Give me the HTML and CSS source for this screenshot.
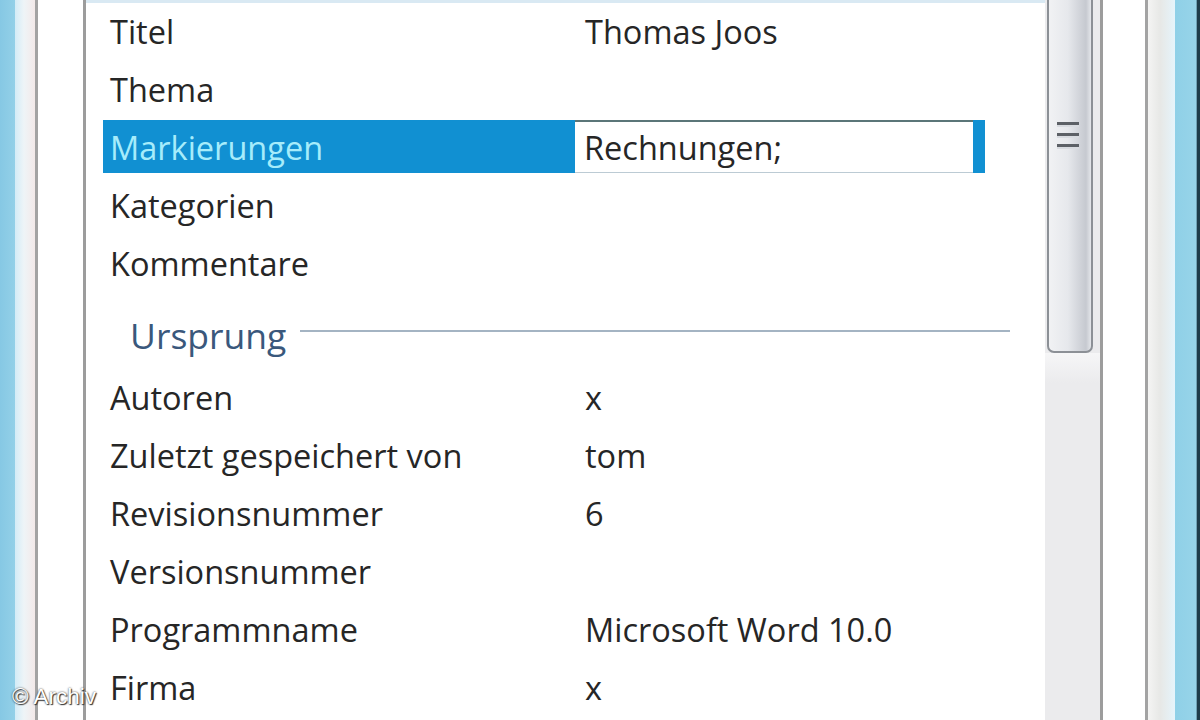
FILE: index.html
```html
<!DOCTYPE html>
<html lang="de">
<head>
<meta charset="utf-8">
<title>Eigenschaften</title>
<link rel="stylesheet" href="styles.css">
</head>
<body>
<div class="frame-blue-l"></div>
<div class="frame-soft-l"></div>
<div class="dialog">
  <div class="listview">
    <div class="content">
      <div class="topline"></div>
      <div class="row"><div class="label">Titel</div><div class="value">Thomas Joos</div></div>
      <div class="row"><div class="label">Thema</div><div class="value"></div></div>
      <div class="row selected"><div class="label">Markierungen</div><div class="edit">Rechnungen;</div></div>
      <div class="row"><div class="label">Kategorien</div><div class="value"></div></div>
      <div class="row"><div class="label">Kommentare</div><div class="value"></div></div>
      <div class="group"><span class="group-title">Ursprung</span><span class="group-line"></span></div>
      <div class="row"><div class="label">Autoren</div><div class="value">x</div></div>
      <div class="row"><div class="label">Zuletzt gespeichert von</div><div class="value">tom</div></div>
      <div class="row"><div class="label">Revisionsnummer</div><div class="value">6</div></div>
      <div class="row"><div class="label">Versionsnummer</div><div class="value"></div></div>
      <div class="row"><div class="label">Programmname</div><div class="value">Microsoft Word 10.0</div></div>
      <div class="row"><div class="label">Firma</div><div class="value">x</div></div>
    </div>
    <div class="scrollbar">
      <div class="thumb">
        <div class="grip"><span></span><span></span><span></span></div>
      </div>
      <div class="track"></div>
    </div>
  </div>
</div>
<div class="frame-soft-r"></div>
<div class="frame-blue-r"></div>
<div class="watermark">© Archiv</div>
</body>
</html>
```

FILE: styles.css
```css
* { box-sizing: border-box; }
html, body { margin: 0; padding: 0; }
body {
  width: 1200px;
  height: 720px;
  overflow: hidden;
  display: flex;
  position: relative;
  background: #ffffff;
  font-family: "Open Sans", "Liberation Sans", sans-serif;
  color: #262626;
}
.frame-blue-l {
  width: 15px;
  background: linear-gradient(to right, #86c8e4, #93d0e8);
}
.frame-soft-l {
  width: 20px;
  background: linear-gradient(to right, #d3ecf7, #eef4f7 45%, #f3e9e9);
}
.dialog {
  width: 1113px;
  display: flex;
  background: #ffffff;
  border-left: 3px solid #a3a3a3;
  border-right: 3px solid #a3a3a3;
  padding: 0 42px 0 45px;
}
.listview {
  flex: 1;
  display: flex;
  border-left: 3px solid #9c9c9c;
  border-right: 3px solid #9c9c9c;
}
.content {
  flex: 1;
  display: flex;
  flex-direction: column;
}
.topline {
  height: 3px;
  margin-bottom: 1px;
  background: #d9e9f3;
}
.row {
  display: flex;
  align-items: stretch;
  width: 882px;
  height: 53px;
  margin: 0 0 5px 17px;
  font-size: 32.5px;
  line-height: 55px;
  white-space: nowrap;
}
.label {
  width: 472px;
  padding-left: 7px;
}
.value {
  padding-left: 10px;
}
.row.selected {
  background: #1190d2;
}
.row.selected .label {
  color: #a6ecfb;
}
.edit {
  width: 398px;
  background: #ffffff;
  border-top: 2px solid #5b7678;
  border-bottom: 1px solid #bccbd4;
  padding-left: 9px;
  line-height: 52px;
}
.group {
  height: 76px;
  display: flex;
  align-items: center;
  padding: 6px 35px 0 44px;
}
.group-title {
  font-size: 35.5px;
  color: #3a587c;
}
.group-line {
  flex: 1;
  height: 2px;
  margin: 0 0 8px 14px;
  background: #a4b4c3;
}
.scrollbar {
  width: 55px;
  display: flex;
  flex-direction: column;
  background: #ebebed;
}
.thumb {
  height: 359px;
  margin: -6px 7px 0 2px;
  border: 2px solid #8c9096;
  border-radius: 0 0 7px 7px;
  background: linear-gradient(to right, #f1f2f4, #e6e8ec 45%, #c6c9d0 88%, #e4e6ea);
  display: flex;
  justify-content: center;
  padding-top: 126px;
}
.grip {
  display: flex;
  flex-direction: column;
  gap: 8px;
  margin-left: -4px;
}
.grip span {
  display: block;
  width: 22px;
  height: 3px;
  background: #5c6066;
  box-shadow: 0 2px 0 #d8dbe0;
}
.track {
  flex: 1;
  background: linear-gradient(to bottom, #f6f6f7 0, #ebebed 30px);
}
.frame-soft-r {
  width: 27px;
  background: linear-gradient(to right, #f4f4f3, #e7e8e6 45%, #e6f4fb);
}
.frame-blue-r {
  width: 25px;
  background: linear-gradient(to right, #8fd0e7, #97d4e9 85%, #1d3c4a 88%, #1d3c4a);
}
.watermark {
  position: absolute;
  left: 12px;
  top: 684px;
  font-family: "Liberation Sans", Arial, sans-serif;
  font-size: 22.5px;
  color: #ffffff;
  text-shadow: 0 0 2px #333, 1px 1px 1px #333;
}
```
